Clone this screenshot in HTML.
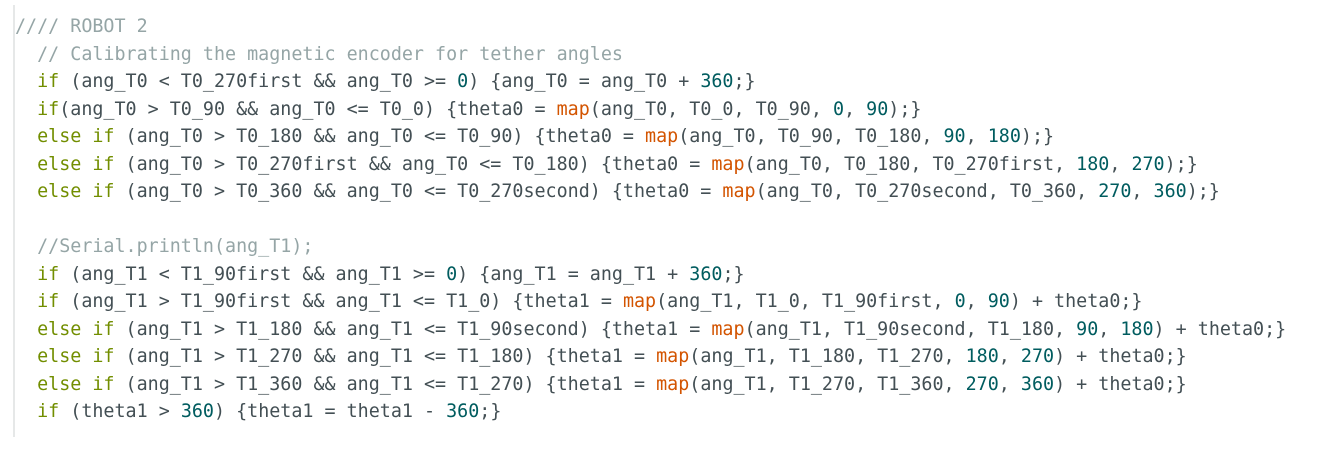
<!DOCTYPE html>
<html><head><meta charset="utf-8"><style>
html,body{margin:0;padding:0;background:#fff;width:1320px;height:450px;overflow:hidden}
.bar{position:absolute;left:13px;top:5px;width:2px;height:432px;background:#e6e8e8}
pre{position:absolute;left:15px;top:13px;margin:0;font-family:"DejaVu Sans Mono",monospace;font-size:18.37px;line-height:27.5px;color:#434f54}
.c{color:#95a5a6}.k{color:#728e00}.n{color:#005c5f}.m{color:#d35400}
</style></head><body>
<div class="bar"></div>
<pre><span class="c">//// ROBOT 2</span>
  <span class="c">// Calibrating the magnetic encoder for tether angles</span>
  <span class="k">if</span> (ang_T0 &lt; T0_270first &amp;&amp; ang_T0 &gt;= <span class="n">0</span>) {ang_T0 = ang_T0 + <span class="n">360</span>;}
  <span class="k">if</span>(ang_T0 &gt; T0_90 &amp;&amp; ang_T0 &lt;= T0_0) {theta0 = <span class="m">map</span>(ang_T0, T0_0, T0_90, <span class="n">0</span>, <span class="n">90</span>);}
  <span class="k">else if</span> (ang_T0 &gt; T0_180 &amp;&amp; ang_T0 &lt;= T0_90) {theta0 = <span class="m">map</span>(ang_T0, T0_90, T0_180, <span class="n">90</span>, <span class="n">180</span>);}
  <span class="k">else if</span> (ang_T0 &gt; T0_270first &amp;&amp; ang_T0 &lt;= T0_180) {theta0 = <span class="m">map</span>(ang_T0, T0_180, T0_270first, <span class="n">180</span>, <span class="n">270</span>);}
  <span class="k">else if</span> (ang_T0 &gt; T0_360 &amp;&amp; ang_T0 &lt;= T0_270second) {theta0 = <span class="m">map</span>(ang_T0, T0_270second, T0_360, <span class="n">270</span>, <span class="n">360</span>);}

  <span class="c">//Serial.println(ang_T1);</span>
  <span class="k">if</span> (ang_T1 &lt; T1_90first &amp;&amp; ang_T1 &gt;= <span class="n">0</span>) {ang_T1 = ang_T1 + <span class="n">360</span>;}
  <span class="k">if</span> (ang_T1 &gt; T1_90first &amp;&amp; ang_T1 &lt;= T1_0) {theta1 = <span class="m">map</span>(ang_T1, T1_0, T1_90first, <span class="n">0</span>, <span class="n">90</span>) + theta0;}
  <span class="k">else if</span> (ang_T1 &gt; T1_180 &amp;&amp; ang_T1 &lt;= T1_90second) {theta1 = <span class="m">map</span>(ang_T1, T1_90second, T1_180, <span class="n">90</span>, <span class="n">180</span>) + theta0;}
  <span class="k">else if</span> (ang_T1 &gt; T1_270 &amp;&amp; ang_T1 &lt;= T1_180) {theta1 = <span class="m">map</span>(ang_T1, T1_180, T1_270, <span class="n">180</span>, <span class="n">270</span>) + theta0;}
  <span class="k">else if</span> (ang_T1 &gt; T1_360 &amp;&amp; ang_T1 &lt;= T1_270) {theta1 = <span class="m">map</span>(ang_T1, T1_270, T1_360, <span class="n">270</span>, <span class="n">360</span>) + theta0;}
  <span class="k">if</span> (theta1 &gt; <span class="n">360</span>) {theta1 = theta1 - <span class="n">360</span>;}
</pre>
</body></html>
